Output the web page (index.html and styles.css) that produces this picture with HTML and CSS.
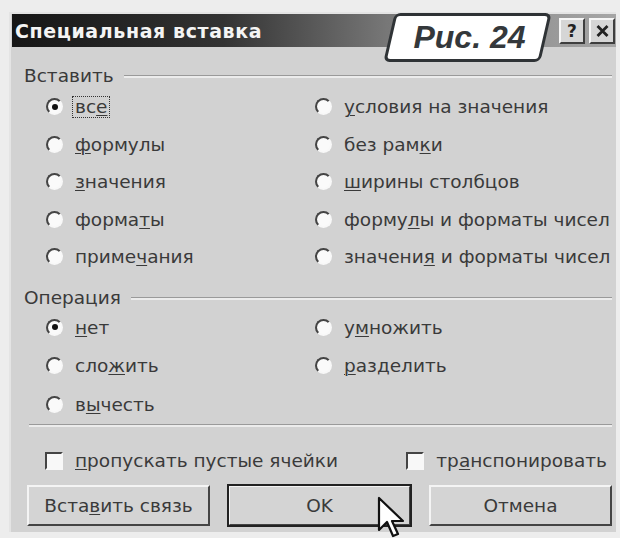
FILE: index.html
```html
<!DOCTYPE html>
<html lang="ru">
<head>
<meta charset="utf-8">
<title>Специальная вставка</title>
<link rel="stylesheet" href="styles.css">
</head>
<body>
<div class="dialog">
  <div class="titlebar">
    <span class="title">Специальная вставка</span>
    <div class="caption-buttons">
      <span class="cap-btn">?</span>
      <span class="cap-btn">
        <svg width="13" height="12" viewBox="0 0 13 12"><path d="M1.5 1 L11.5 11 M11.5 1 L1.5 11" stroke="#222" stroke-width="2.8"/></svg>
      </span>
    </div>
  </div>
  <div class="badge"><span>Рис. 24</span></div>

  <div class="group">
    <div class="legend"><span>Вставить</span><i class="rule"></i></div>
    <div class="options paste">
      <label class="opt"><span class="radio on"></span><span class="focus">вс<u>е</u></span></label>
      <label class="opt"><span class="radio"></span><span><u>у</u>словия на значения</span></label>
      <label class="opt"><span class="radio"></span><span><u>ф</u>ормулы</span></label>
      <label class="opt"><span class="radio"></span><span>без рам<u>к</u>и</span></label>
      <label class="opt"><span class="radio"></span><span><u>з</u>начения</span></label>
      <label class="opt"><span class="radio"></span><span><u>ш</u>ирины столбцов</span></label>
      <label class="opt"><span class="radio"></span><span>форма<u>т</u>ы</span></label>
      <label class="opt"><span class="radio"></span><span>форму<u>л</u>ы и форматы чисел</span></label>
      <label class="opt"><span class="radio"></span><span>приме<u>ч</u>ания</span></label>
      <label class="opt"><span class="radio"></span><span>значени<u>я</u> и форматы чисел</span></label>
    </div>
  </div>

  <div class="group op">
    <div class="legend"><span>Операция</span><i class="rule"></i></div>
    <div class="options ops">
      <label class="opt"><span class="radio on"></span><span><u>н</u>ет</span></label>
      <label class="opt"><span class="radio"></span><span>у<u>м</u>ножить</span></label>
      <label class="opt"><span class="radio"></span><span>сло<u>ж</u>ить</span></label>
      <label class="opt"><span class="radio"></span><span><u>р</u>азделить</span></label>
      <label class="opt"><span class="radio"></span><span>в<u>ы</u>честь</span></label>
    </div>
  </div>

  <div class="separator"></div>

  <div class="checks">
    <label class="opt"><span class="check"></span><span><u>п</u>ропускать пустые ячейки</span></label>
    <label class="opt"><span class="check"></span><span>тр<u>а</u>нспонировать</span></label>
  </div>

  <div class="buttons">
    <span class="btn">Вста<u>в</u>ить связь</span>
    <span class="btn default">OK</span>
    <span class="btn">Отмена</span>
  </div>

  <svg class="cursor" width="30" height="46" viewBox="0 0 15 23">
    <path d="M1 1 L1 17 L5 13 L8 20 L10.5 19 L7.5 12.5 L13 12.5 Z" fill="#fff" stroke="#111" stroke-width="1.1" stroke-linejoin="round"/>
  </svg>
</div>
</body>
</html>
```

FILE: styles.css
```css
* { box-sizing: border-box; }

html, body {
  margin: 0;
  padding: 0;
  background: #ededed;
  width: 620px;
  height: 538px;
  overflow: hidden;
}

.dialog {
  position: relative;
  margin: 12px 4px 0 9px;
  width: 607px;
  height: 520px;
  background: #d2d2d2;
  border-left: 2px solid #e4e4e4;
  border-top: 2px solid #e4e4e4;
  padding: 0 0 0 1px;
  font-family: "DejaVu Sans", "Liberation Sans", sans-serif;
  font-size: 18.5px;
  color: #3a3a3a;
}

/* caption bar */
.titlebar {
  height: 33px;
  display: flex;
  align-items: center;
  justify-content: space-between;
  background: linear-gradient(to right, #161616 0%, #333 35%, #777 62%, #a6a6a6 100%);
  padding: 0 1px 0 3px;
}

.title {
  color: #f4f4f4;
  font-weight: bold;
  font-size: 19px;
  letter-spacing: 0.6px;
}

.caption-buttons {
  display: flex;
  gap: 4px;
}

.cap-btn {
  width: 26px;
  height: 26px;
  display: flex;
  align-items: center;
  justify-content: center;
  background: #d6d6d6;
  border: 2px solid;
  border-color: #f6f6f6 #3e3e3e #3e3e3e #f6f6f6;
  font-weight: bold;
  font-size: 17px;
  color: #222;
}

/* figure label laid over the caption */
.badge {
  position: absolute;
  left: 378px;
  top: -1px;
  width: 157px;
  height: 49px;
  display: flex;
  align-items: center;
  justify-content: center;
}

.badge::before {
  content: "";
  position: absolute;
  inset: 0;
  background: #fff;
  border: 3px solid #2f3336;
  border-radius: 6px;
  transform: skewX(-13deg);
}

.badge span {
  position: relative;
  font-family: "Liberation Sans", Arial, sans-serif;
  font-style: italic;
  font-weight: bold;
  font-size: 32px;
  color: #34383b;
  margin-left: 4px;
}

/* option groups */
.group {
  padding: 19px 4px 0 12px;
}

.group.op {
  padding-top: 12.5px;
}

.legend {
  height: 18px;
  display: flex;
  align-items: center;
  gap: 10px;
}

.rule {
  flex: 1;
  height: 3px;
  margin-top: 3px;
  border-top: 1px solid #9a9a9a;
  border-bottom: 2px solid #ececec;
}

.options {
  display: grid;
  grid-template-columns: 269px 1fr;
  padding-left: 22px;
}

.paste {
  grid-auto-rows: 37.5px;
  margin-top: 4px;
}

.ops {
  grid-auto-rows: 38.5px;
  margin-top: 2px;
}

.opt {
  display: flex;
  align-items: center;
  gap: 12px;
  white-space: nowrap;
}

u { text-decoration-thickness: 1px; text-underline-offset: 2px; }

.radio {
  position: relative;
  width: 17px;
  height: 17px;
  flex: none;
  border-radius: 50%;
  border: 2px solid;
  border-color: #444 #f8f8f8 #f8f8f8 #444;
  background: #fafafa;
}

.radio.on::after {
  content: "";
  position: absolute;
  left: 3.5px;
  top: 3.5px;
  width: 6px;
  height: 6px;
  border-radius: 50%;
  background: #111;
}

.focus {
  border: 1px dotted #333;
  padding: 0 2px;
  margin-left: -3px;
  line-height: 20px;
}

.separator {
  margin: 0 4px 0 17px;
  height: 3px;
  border-top: 1px solid #9a9a9a;
  border-bottom: 2px solid #ececec;
}

.checks {
  display: flex;
  justify-content: space-between;
  align-items: center;
  margin-top: 10px;
  height: 48px;
  padding: 0 9px 0 33px;
}

.check {
  width: 18px;
  height: 18px;
  flex: none;
  background: #f8f8f8;
  border: 2px solid;
  border-color: #444 #f8f8f8 #f8f8f8 #444;
}

.buttons {
  display: flex;
  gap: 18px;
  padding-left: 15px;
}

.btn {
  width: 183px;
  height: 41px;
  display: flex;
  align-items: center;
  justify-content: center;
  background: #d4d4d4;
  border: 2px solid;
  border-color: #f4f4f4 #444 #444 #f4f4f4;
}

.btn.default {
  outline: 2px solid #222;
  outline-offset: -1px;
}

.cursor {
  position: absolute;
  left: 366px;
  top: 482px;
}
```
